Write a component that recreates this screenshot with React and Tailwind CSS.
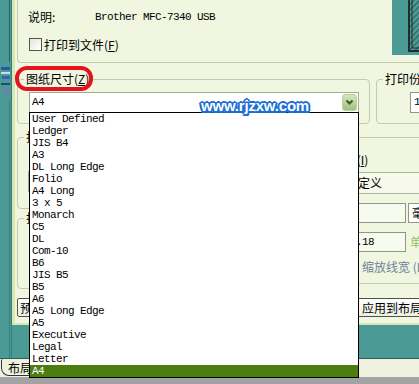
import React from "react";

const sizes = [
  "User Defined", "Ledger", "JIS B4", "A3", "DL Long Edge", "Folio", "A4 Long", "3 x 5",
  "Monarch", "C5", "DL", "Com-10", "B6", "JIS B5", "B5", "A6", "A5 Long Edge", "A5",
  "Executive", "Legal", "Letter", "A4",
];

const mono = "font-['Liberation_Mono',monospace] text-[11px] tracking-[-0.6px]";

function Check() {
  return (
    <span className="inline-block w-[13px] h-[13px] shrink-0 border border-[#4e5a46] bg-[linear-gradient(135deg,#e4e6da,#ffffff)]" />
  );
}

function Group({ title, className, children }) {
  return (
    <fieldset className={"border border-[#c2cbae] rounded-[4px] min-w-0 " + className}>
      <legend className="ml-[6px] px-[2px] text-[12px] leading-[16px] text-black whitespace-nowrap">{title}</legend>
      {children}
    </fieldset>
  );
}

function DropBtn() {
  return (
    <span className="flex items-center justify-center w-[15px] h-[17px] mr-[1px] rounded-[3px] border border-[#b9cfa0] bg-[linear-gradient(180deg,#d3e6bf,#9fc27d)]">
      <svg width="9" height="7" viewBox="0 0 9 7">
        <path d="M1.5 1.5 L4.5 4.5 L7.5 1.5" fill="none" stroke="#3f5a2a" strokeWidth="2" />
      </svg>
    </span>
  );
}

function LeftStrip() {
  return (
    <div className="w-[12px] shrink-0 h-full bg-[#4b9a95] border-r border-[#3a7d78]">
      <svg width="12" height="358" viewBox="0 0 12 358">
        <line x1="9.5" y1="0" x2="9.5" y2="62" stroke="#2f625e" strokeWidth="1" />
        <rect x="1" y="67" width="9" height="3" fill="#2b59a6" />
        <rect x="1" y="72" width="9" height="2" fill="#cfdbe8" />
        <rect x="2" y="76" width="8" height="3" fill="#3564b0" />
        <rect x="1" y="83" width="9" height="2" fill="#2a4570" />
        <rect x="3" y="88" width="7" height="6" fill="#6884a6" />
        <line x1="9.5" y1="100" x2="9.5" y2="358" stroke="#3d807b" strokeWidth="1" />
      </svg>
    </div>
  );
}

function Box({ className, children }) {
  return <span className={"block border border-[#a3ab97] bg-white " + className}>{children}</span>;
}

export default function App() {
  return (
    <div className="relative w-[419px] h-[384px] overflow-hidden bg-[#4b9a95] font-['Noto_Sans_CJK_SC',sans-serif] text-[12px] text-black">
      <div className="flex h-[358px]">
        <LeftStrip />
        <div className="w-[470px] shrink-0 h-[325px] bg-[#f1f6e1] border-l-[3px] border-b-[2px] border-[#d4e9b6] pl-[1px]">
          {/* printer group */}
          <div className="flex h-[63px] border-l border-b border-[#c2cbae] rounded-bl-[4px] ml-[1px]">
            <div className="w-[374px] pl-[10px] pt-[10px]">
              <div className="flex items-center h-[14px] leading-[14px]">
                <span className="w-[67px]">说明:</span>
                <span className={mono}>Brother MFC-7340 USB</span>
              </div>
              <div className="flex items-center gap-[2px] mt-[14px] h-[13px] ml-[1px]">
                <Check />
                <span className="leading-[13px]">打印到文件(<u>F</u>)</span>
              </div>
            </div>
            <div className="w-[60px] h-[55px] bg-[#4b9a95] pl-[16px]">
              <svg width="44" height="52" viewBox="0 0 44 52">
                <defs>
                  <pattern id="hatch" width="4" height="4" patternUnits="userSpaceOnUse" patternTransform="rotate(45)">
                    <rect width="4" height="4" fill="#4b9a95" />
                    <line x1="0" y1="0" x2="0" y2="4" stroke="#24403d" strokeWidth="1.4" />
                  </pattern>
                </defs>
                <rect x="1" y="-2" width="42" height="53" fill="url(#hatch)" stroke="#1f2e2c" strokeWidth="2" />
                <rect x="4" y="-2" width="36" height="50" fill="none" stroke="#1f2e2c" strokeWidth="1" />
              </svg>
            </div>
          </div>

          {/* paper size + copies */}
          <div className="flex mt-[8px] ml-[1px]">
            <Group title={<>图纸尺寸(<u>Z</u>)</>} className="w-[353px]">
              <div className="pt-[5px] pl-[11px] pr-[10px] pb-[10px]">
                <div className="flex items-center h-[21px] border border-[#a3ab97] bg-white">
                  <span className={"flex-1 pl-[2px] " + mono}>A4</span>
                  <DropBtn />
                </div>
              </div>
            </Group>
            <Group title="打印份数" className="ml-[6px] w-[90px]">
              <div className="pt-[5px] pl-[33px] pb-[10px]">
                <div className={"w-[40px] h-[21px] border border-[#8e9982] bg-white pl-[3px] leading-[19px] " + mono}>1</div>
              </div>
            </Group>
          </div>

          {/* area / offset / scale */}
          <div className="flex mt-[5px] ml-[1px]">
            <div className="w-[260px] flex flex-col">
              <Group title="打印区域" className="h-[80px]">
                <div className="pl-[10px] pt-[26px]">
                  <Box className="w-[110px] h-[21px]" />
                </div>
              </Group>
              <Group title="打印偏移" className="mt-[1px] h-[79px]">
                <div className="pl-[30px] pt-[6px] flex flex-col gap-[6px]">
                  <Box className="w-[70px] h-[20px]" />
                  <Box className="w-[70px] h-[20px]" />
                </div>
              </Group>
            </div>

            <Group title="打印比例" className="ml-[6px] w-[180px] h-[155px]">
              <div className="pl-[6px]">
                <div className="flex items-center gap-[3px] mt-[8px] h-[14px]">
                  <Check />
                  <span className="leading-[14px] whitespace-nowrap">布满图纸 (<u>I</u>)</span>
                </div>
                <div className="flex items-center mt-[5px] h-[22px] pl-[50px]">
                  <span className="flex-1 h-[22px] border border-[#a9b596] bg-[#f6f9ec] pl-[5px] leading-[20px]">自定义</span>
                </div>
                <div className="flex items-center mt-[9px] h-[20px] ml-[55px]">
                  <span className="w-[61px] h-[20px] border border-[#8e9982] bg-[#f7faee]" />
                  <span className="ml-[2px] w-[50px] h-[20px] border border-[#8e9982] bg-white pl-[3px] leading-[18px]">毫米</span>
                </div>
                <div className="flex items-center mt-[9px] h-[20px] ml-[55px]">
                  <span className={"w-[61px] h-[20px] border border-[#8e9982] bg-[#f7faee] pl-[4px] leading-[18px] " + mono}>4.18</span>
                  <span className="ml-[4px] text-[#8cc46c] whitespace-nowrap">单位</span>
                </div>
                <div className="flex items-center gap-[4px] mt-[8px] h-[14px] ml-[55px]">
                  <Check />
                  <span className="leading-[14px] text-[#6f8394] whitespace-nowrap">缩放线宽 (L)</span>
                </div>
              </div>
            </Group>
          </div>

          {/* buttons */}
          <div className="flex mt-[9px] h-[19px] ml-[1px]">
            <button className="w-[80px] h-[19px] border border-[#4a5546] rounded-[2px] bg-[linear-gradient(180deg,#ffffff,#ecefe2)] text-left pl-[2px] leading-[17px]">预览</button>
            <button className="ml-[260px] w-[100px] h-[19px] border border-[#4a5546] rounded-[2px] bg-[linear-gradient(180deg,#ffffff,#ecefe2)] text-left pl-[4px] leading-[17px] whitespace-nowrap">应用到布局(T)</button>
          </div>
        </div>
      </div>

      {/* layout tabs */}
      <div className="h-[19px] bg-[#eef2df] border-t border-[#2d5e5a] flex">
        <div className="ml-[1px] h-[17px] border-l border-b border-[#333] rounded-bl-[8px] rounded-tl-[2px] pl-[6px] pr-[4px] leading-[17px]">布局1</div>
      </div>
      <div className="h-[7px] bg-[#a3a3a3]" />

      {/* open dropdown list */}
      <div className="absolute left-[29px] top-[112px] w-[330px] h-[266px] border border-black bg-white">
        {sizes.map((s, i) => (
          <div
            key={s + i}
            className={
              "h-[12px] leading-[12px] pl-[2px] whitespace-pre " +
              mono +
              (i === sizes.length - 1 ? " bg-[#4b7d0f] text-white" : " text-black")
            }
          >
            {s}
          </div>
        ))}
      </div>

      {/* red annotation ring */}
      <div className="absolute left-[15px] top-[66px] w-[78px] h-[25px] border-[4px] border-[#e5131b] rounded-[12px]" />

      {/* watermark */}
      <div className="absolute left-[201px] top-[98px] font-['Liberation_Sans',sans-serif] font-bold text-[15px] leading-[15px] tracking-[-0.2px] text-white [text-shadow:-1.5px_-1.5px_0_#1c6ed6,1.5px_-1.5px_0_#1c6ed6,-1.5px_1.5px_0_#1c6ed6,1.5px_1.5px_0_#1c6ed6,0_2px_0_#1c6ed6,0_-2px_0_#1c6ed6,2px_0_0_#1c6ed6,-2px_0_0_#1c6ed6]">
        www.rjzxw.com
      </div>
    </div>
  );
}
